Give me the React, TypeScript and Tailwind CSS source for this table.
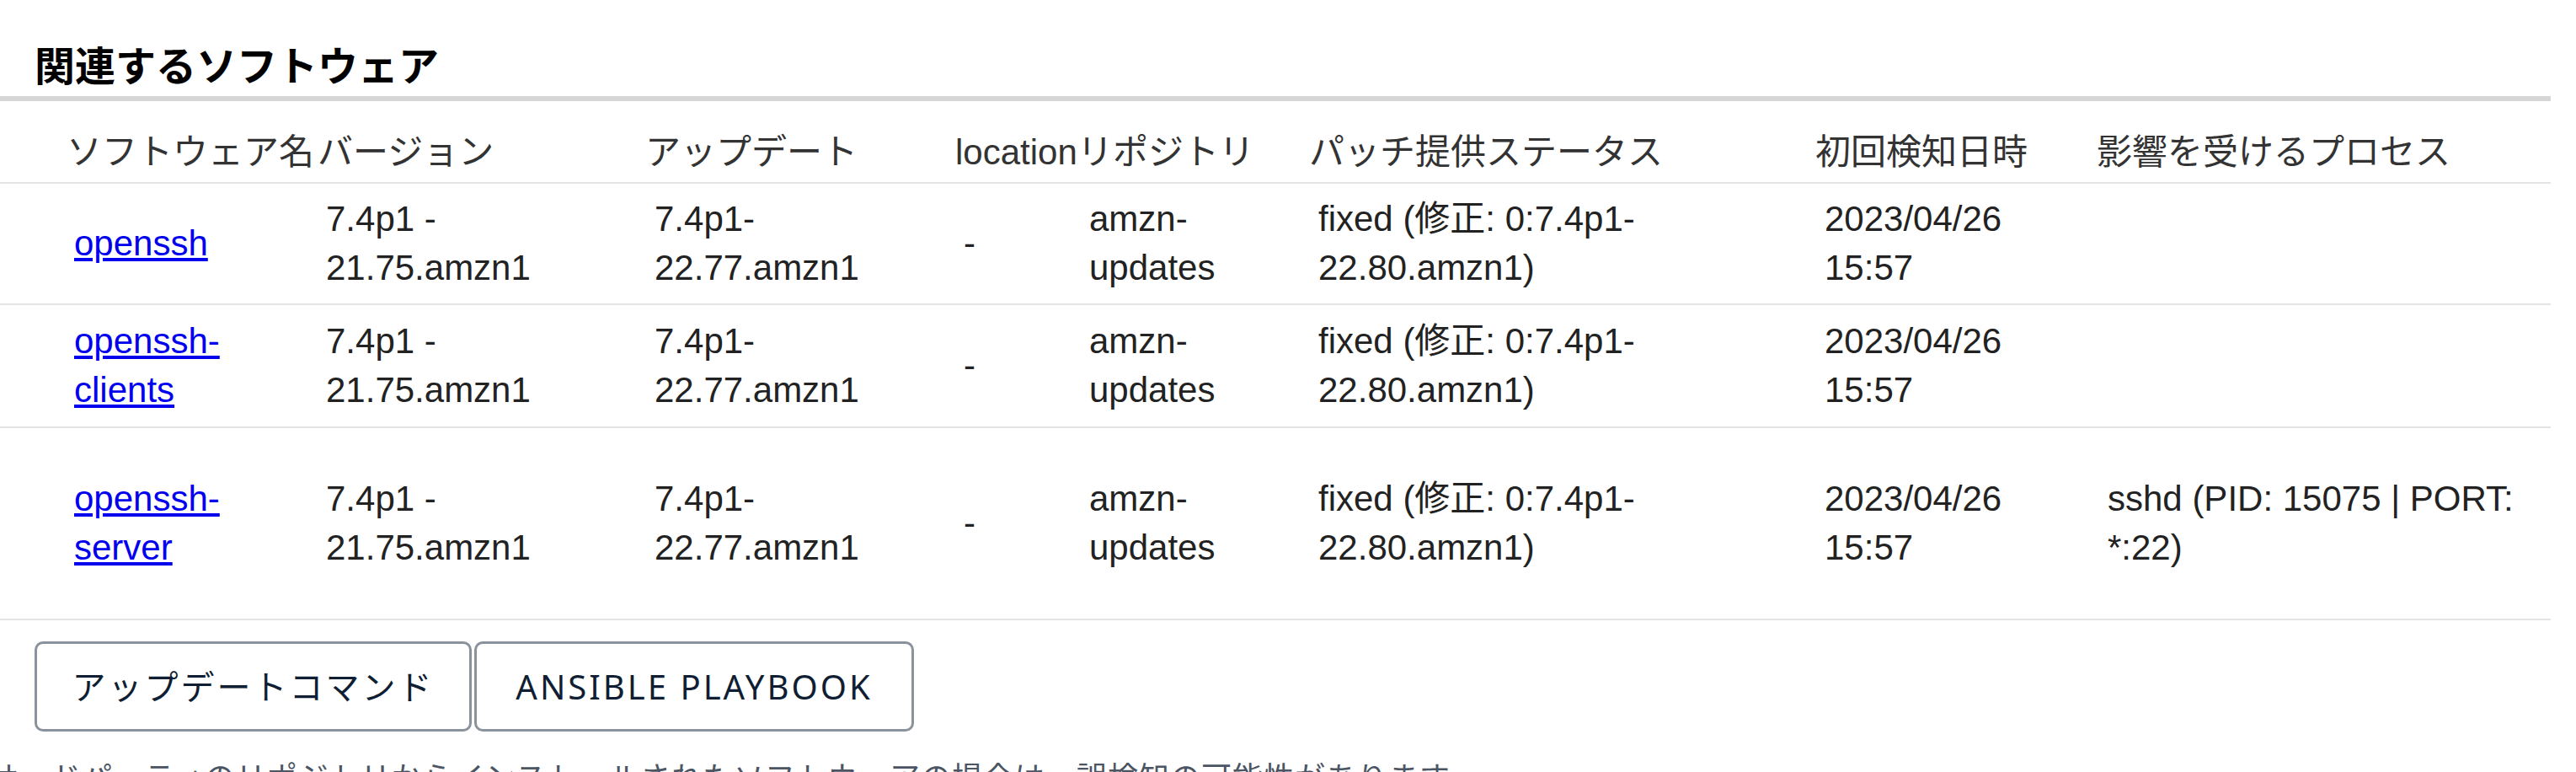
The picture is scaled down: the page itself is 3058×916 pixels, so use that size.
import React from "react";

type Row = {
  name: string[];
  cur: string[];
  upd: string[];
  loc: string;
  repo: string[];
  patch: string[];
  date: string[];
  proc: string[];
  h: string;
};

const rows: Row[] = [
  {
    name: ["openssh"],
    cur: ["7.4p1 -", "21.75.amzn1"],
    upd: ["7.4p1-", "22.77.amzn1"],
    loc: "-",
    repo: ["amzn-", "updates"],
    patch: ["fixed (修正: 0:7.4p1-", "22.80.amzn1)"],
    date: ["2023/04/26", "15:57"],
    proc: [],
    h: "h-[144px]",
  },
  {
    name: ["openssh-", "clients"],
    cur: ["7.4p1 -", "21.75.amzn1"],
    upd: ["7.4p1-", "22.77.amzn1"],
    loc: "-",
    repo: ["amzn-", "updates"],
    patch: ["fixed (修正: 0:7.4p1-", "22.80.amzn1)"],
    date: ["2023/04/26", "15:57"],
    proc: [],
    h: "h-[146px]",
  },
  {
    name: ["openssh-", "server"],
    cur: ["7.4p1 -", "21.75.amzn1"],
    upd: ["7.4p1-", "22.77.amzn1"],
    loc: "-",
    repo: ["amzn-", "updates"],
    patch: ["fixed (修正: 0:7.4p1-", "22.80.amzn1)"],
    date: ["2023/04/26", "15:57"],
    proc: ["sshd (PID: 15075 | PORT:", "*:22)"],
    h: "h-[228px]",
  },
];

function Lines({ lines }: { lines: string[] }) {
  return (
    <>
      {lines.map((l, i) => (
        <span key={i} className="block whitespace-nowrap">
          {l}
        </span>
      ))}
    </>
  );
}

export default function App() {
  return (
    <div className="w-[3058px] h-[916px] overflow-hidden bg-white font-['Liberation_Sans','Noto_Sans_CJK_JP',sans-serif] text-[#222]">
      <div className="pl-[41px] pt-[46px]">
        <h2 className="text-[48px] leading-[68px] font-bold text-black">関連するソフトウェア</h2>
      </div>

      <div className="w-[3028px] border-t-[6px] border-[#d6d6d6]">
        <div className="grid grid-cols-[377px_389px_368px_145px_275px_601px_334px_539px] items-end border-b-2 border-[#e4e4e4] pt-[32px] pb-[6px] text-[42px] leading-[58px] text-[#333] whitespace-nowrap">
          <div className="pl-[79px]">ソフトウェア名</div>
          <div>バージョン</div>
          <div>アップデート</div>
          <div>location</div>
          <div>リポジトリ</div>
          <div>パッチ提供ステータス</div>
          <div>初回検知日時</div>
          <div>影響を受けるプロセス</div>
        </div>

        {rows.map((r, i) => (
          <div
            key={i}
            className={`grid grid-cols-[377px_389px_368px_145px_275px_601px_334px_539px] items-center border-b-2 border-[#e4e4e4] text-[42px] leading-[58px] text-[#222] ${r.h}`}
          >
            <div className="pl-[88px]">
              <a href="#" className="text-[#0000ee] underline">
                <Lines lines={r.name} />
              </a>
            </div>
            <div className="pl-[10px]">
              <Lines lines={r.cur} />
            </div>
            <div className="pl-[11px]">
              <Lines lines={r.upd} />
            </div>
            <div className="pl-[10px]">{r.loc}</div>
            <div className="pl-[14px]">
              <Lines lines={r.repo} />
            </div>
            <div className="pl-[11px]">
              <Lines lines={r.patch} />
            </div>
            <div className="pl-[11px]">
              <Lines lines={r.date} />
            </div>
            <div className="pl-[13px]">
              <Lines lines={r.proc} />
            </div>
          </div>
        ))}
      </div>

      <div className="flex gap-[3px] pl-[41px] pt-[25px]">
        <button className="flex h-[107px] w-[519px] items-center justify-center rounded-[10px] border-[3px] border-[#8a929c] bg-white font-['Noto_Sans','Noto_Sans_CJK_JP',sans-serif] text-[40px] tracking-[3px] text-[#0f1e33]">
          アップデートコマンド
        </button>
        <button className="flex h-[107px] w-[522px] items-center justify-center rounded-[10px] border-[3px] border-[#8a929c] bg-white font-['Noto_Sans','Noto_Sans_CJK_JP',sans-serif] text-[40px] tracking-[3px] text-[#0f1e33]">
          ANSIBLE PLAYBOOK
        </button>
      </div>

      <p className="-ml-[14px] mt-[25px] whitespace-nowrap font-['Noto_Sans_CJK_JP',sans-serif] text-[36px] leading-[54px] tracking-[1px] text-[#4b5563]">
        サードパーティのリポジトリからインストールされたソフトウェアの場合は、誤検知の可能性があります。
      </p>
    </div>
  );
}
